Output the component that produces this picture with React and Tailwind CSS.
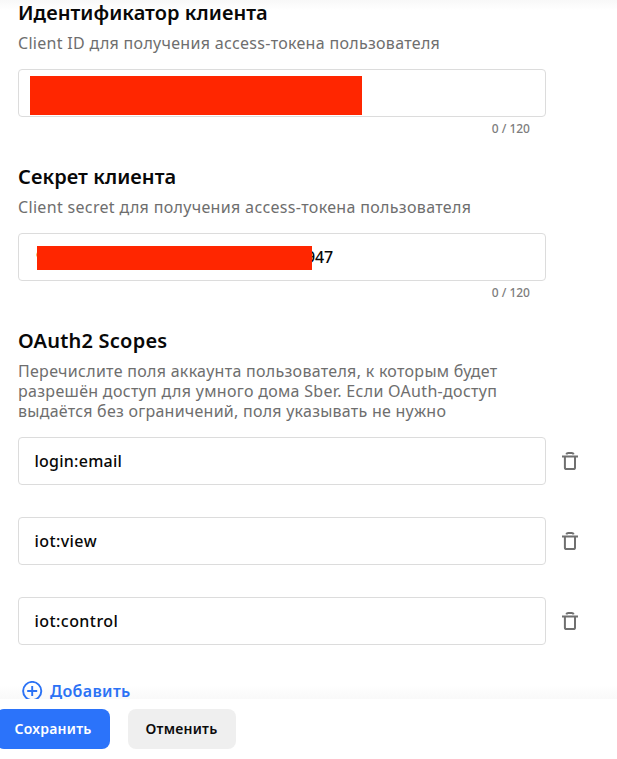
function Heading({ children, className }) {
  return <h2 className={`h-6 whitespace-nowrap text-[20px] leading-6 font-semibold text-[#080808] ${className}`}>{children}</h2>;
}

function Line({ children, className }) {
  return <span className={`block h-5 whitespace-nowrap text-base leading-5 text-[#6e6e6e] ${className}`}>{children}</span>;
}

function Field({ children }) {
  return (
    <div className="flex h-12 w-[528px] shrink-0 items-center rounded-[4px] border border-[#dcdcdc] bg-white text-base font-medium text-[#080808]">
      {children}
    </div>
  );
}

function Counter() {
  return <div className="mt-1 w-[512px] text-right text-xs leading-4 font-medium text-[#7d7d7d]">0 / 120</div>;
}

function Trash() {
  return (
    <svg width="18" height="20" viewBox="0 0 18 20" fill="none" stroke="#707070" strokeWidth="2">
      <path d="M1 5.5H17M3.9 5.5V16.4Q3.9 18.1 5.6 18.1H12.3Q14 18.1 14 16.4V5.5" />
      <path d="M5.3 3.4Q5.8 2 7.2 2H10.8Q12.2 2 12.7 3.4" />
    </svg>
  );
}

function Scope({ children, className }) {
  return (
    <div className="flex items-center gap-[15px]">
      <Field><span className={`ml-[15.5px] ${className}`}>{children}</span></Field>
      <Trash />
    </div>
  );
}

export default function App() {
  return (
    <div className="flex h-[759px] w-[617px] flex-col overflow-hidden bg-white font-['Noto_Sans',sans-serif]">
      <main className="h-[699px] shrink-0 overflow-hidden bg-[linear-gradient(to_bottom,#f8f8f8_0,#fff_10px,#fff_685px,#f9f9f9_699px)] pt-px pl-[18px]">
        <section className="h-[164px]">
          <Heading className="tracking-[0.05px]">Идентификатор клиента</Heading>
          <div className="mt-2"><Line className="tracking-[0.3px]">Client ID для получения access-токена пользователя</Line></div>
          <div className="mt-4"><Field><span className="mt-[5px] ml-[11px] h-[39px] w-[332px] bg-[#ff2600]" /></Field></div>
          <Counter />
        </section>
        <section className="h-[164px]">
          <Heading className="tracking-[0.07px]">Секрет клиента</Heading>
          <div className="mt-2"><Line className="tracking-[0.33px]">Client secret для получения access-токена пользователя</Line></div>
          <div className="mt-4">
            <Field>
              <span className="ml-[17px] w-2">9</span>
              <span className="z-10 -ml-[7px] mt-[2px] h-6 w-[275px] bg-[#ff2600]" />
              <span className="-ml-[6px] tracking-[-0.2px]">947</span>
            </Field>
          </div>
          <Counter />
        </section>
        <section>
          <Heading className="tracking-[0.22px]">OAuth2 Scopes</Heading>
          <div className="mt-2">
            <Line className="tracking-[0.29px]">Перечислите поля аккаунта пользователя, к которым будет</Line>
            <Line className="tracking-[0.31px]">разрешён доступ для умного дома Sber. Если OAuth-доступ</Line>
            <Line className="tracking-[0.25px]">выдаётся без ограничений, поля указывать не нужно</Line>
          </div>
          <div className="mt-4 flex flex-col gap-8">
            <Scope className="tracking-[0.25px]">login:email</Scope>
            <Scope className="tracking-[0.42px]">iot:view</Scope>
            <Scope className="tracking-[0.44px]">iot:control</Scope>
          </div>
          <div className="mt-[35px] ml-1 flex h-[22px] items-center gap-[7px] text-[#2b72f5]">
            <svg width="21" height="21" viewBox="0 0 21 21" fill="none" stroke="currentColor" strokeWidth="1.9">
              <circle cx="10.2" cy="10" r="9.1" /><path d="M5.2 10H15.2M10.2 5V15" />
            </svg>
            <span className="text-base leading-5 font-semibold tracking-[0.35px]">Добавить</span>
          </div>
        </section>
      </main>
      <footer className="flex h-[60px] shrink-0 gap-[18px] bg-white pt-[10px] text-sm font-semibold">
        <button className="-ml-1 h-10 w-[114px] shrink-0 rounded-lg bg-[#2b73fa] pr-1 pl-1 text-white tracking-[0.25px]">Сохранить</button>
        <button className="h-10 w-[108px] shrink-0 rounded-lg bg-[#efefef] pr-px text-[#0b0b0b] tracking-[0.25px]">Отменить</button>
      </footer>
    </div>
  );
}
